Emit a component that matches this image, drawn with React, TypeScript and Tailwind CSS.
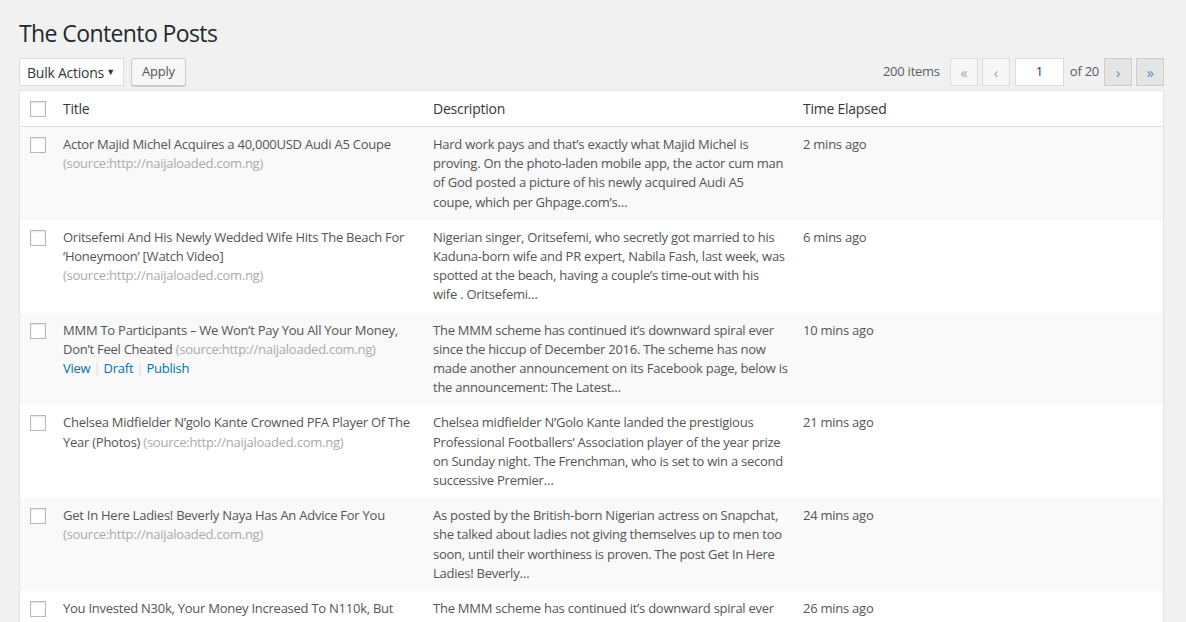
import React from "react";

type Post = {
  title: string[];
  sourceInline?: boolean;
  desc: string[];
  time: string;
  actions?: boolean;
};

const SOURCE = "(source:http://naijaloaded.com.ng)";

const POSTS: Post[] = [
  {
    title: ["Actor Majid Michel Acquires a 40,000USD Audi A5 Coupe"],
    desc: [
      "Hard work pays and that’s exactly what Majid Michel is",
      "proving. On the photo-laden mobile app, the actor cum man",
      "of God posted a picture of his newly acquired Audi A5",
      "coupe, which per Ghpage.com’s…",
    ],
    time: "2 mins ago",
  },
  {
    title: ["Oritsefemi And His Newly Wedded Wife Hits The Beach For", "‘Honeymoon’ [Watch Video]"],
    desc: [
      "Nigerian singer, Oritsefemi, who secretly got married to his",
      "Kaduna-born wife and PR expert, Nabila Fash, last week, was",
      "spotted at the beach, having a couple’s time-out with his",
      "wife . Oritsefemi…",
    ],
    time: "6 mins ago",
  },
  {
    title: ["MMM To Participants – We Won’t Pay You All Your Money,", "Don’t Feel Cheated"],
    sourceInline: true,
    actions: true,
    desc: [
      "The MMM scheme has continued it’s downward spiral ever",
      "since the hiccup of December 2016. The scheme has now",
      "made another announcement on its Facebook page, below is",
      "the announcement: The Latest…",
    ],
    time: "10 mins ago",
  },
  {
    title: ["Chelsea Midfielder N’golo Kante Crowned PFA Player Of The", "Year (Photos)"],
    sourceInline: true,
    desc: [
      "Chelsea midfielder N’Golo Kante landed the prestigious",
      "Professional Footballers’ Association player of the year prize",
      "on Sunday night. The Frenchman, who is set to win a second",
      "successive Premier…",
    ],
    time: "21 mins ago",
  },
  {
    title: ["Get In Here Ladies! Beverly Naya Has An Advice For You"],
    desc: [
      "As posted by the British-born Nigerian actress on Snapchat,",
      "she talked about ladies not giving themselves up to men too",
      "soon, until their worthiness is proven. The post Get In Here",
      "Ladies! Beverly…",
    ],
    time: "24 mins ago",
  },
  {
    title: ["You Invested N30k, Your Money Increased To N110k, But", "You Can’t Withdraw – MMM Participants Lament"],
    desc: [
      "The MMM scheme has continued it’s downward spiral ever",
      "since the hiccup of December 2016. Participants have now",
      "taken to social media to lament over their frozen",
      "accounts. The…",
    ],
    time: "26 mins ago",
  },
];

const COLS = "grid grid-cols-[33px_minmax(0,1fr)_minmax(0,1fr)_minmax(0,1fr)]";

function Checkbox() {
  return <span className="block w-4 h-4 bg-white border border-[#b4b9be] shadow-[inset_0_1px_2px_rgba(0,0,0,0.1)]" />;
}

function PageBtn({ label, active }: { label: string; active?: boolean }) {
  return (
    <span
      className={
        active
          ? "flex items-center justify-center w-7 h-7 border border-[#cccccc] bg-[#e5e5e5] text-[#4f94c4] text-[15px] leading-none"
          : "flex items-center justify-center w-7 h-7 border border-[#dddddd] bg-[#f7f7f7] text-[#a0a5aa] text-[15px] leading-none"
      }
    >
      {label}
    </span>
  );
}

export default function App() {
  return (
    <div
      className="min-h-[622px] bg-[#f1f1f1] text-[13px] text-[#555d66] tracking-[-0.25px]"
      style={{ fontFamily: "'Open Sans', 'Noto Sans', sans-serif" }}
    >
      <div className="pl-[19px] pr-[22px]">
        <h1 className="pt-[19px] pb-[10px] text-[23px] leading-[29px] text-[#23282d] font-normal tracking-[-0.6px]">
          The Contento Posts
        </h1>

        {/* toolbar */}
        <div className="flex items-center h-[28px] mb-[4px]">
          <div className="flex items-center justify-between w-[105px] h-[28px] bg-white border border-[#dddddd] pl-[7px] pr-[8px] text-[14px] text-[#32373c]">
            <span>Bulk Actions</span>
            <span className="text-[9px] text-[#32373c]">▼</span>
          </div>
          <button className="ml-[7px] h-[28px] px-[10px] bg-[#f7f7f7] border border-[#cccccc] rounded-[3px] shadow-[0_1px_0_#cccccc] text-[13px] text-[#555555]">
            Apply
          </button>
          <div className="ml-auto flex items-center">
            <span className="mr-[10px] text-[13px] text-[#555d66]">200 items</span>
            <PageBtn label="«" />
            <span className="w-1" />
            <PageBtn label="‹" />
            <div className="ml-[5px] flex items-center justify-center w-[49px] h-[28px] bg-white border border-[#dddddd] text-[13px] text-[#32373c]">
              1
            </div>
            <span className="ml-[6px] mr-[5px] text-[13px]">of 20</span>
            <PageBtn label="›" active />
            <span className="w-1" />
            <PageBtn label="»" active />
          </div>
        </div>

        {/* table */}
        <div className="bg-white border border-[#e5e5e5] shadow-[0_1px_1px_rgba(0,0,0,0.04)]">
          <div className={COLS + " border-b border-[#e1e1e1] h-[36px] items-center text-[14px] text-[#32373c]"}>
            <div className="pl-[10px]"><Checkbox /></div>
            <div className="pl-[10px]">Title</div>
            <div className="pl-[10px]">Description</div>
            <div className="pl-[10px]">Time Elapsed</div>
          </div>
          {POSTS.map((p, i) => (
            <div
              key={i}
              className={(i % 2 === 0 ? "bg-[#f9f9f9] " : "bg-white ") + COLS + " leading-[19.2px] py-[8px] min-h-[92px]"}
            >
              <div className="pl-[10px] pt-[2px]"><Checkbox /></div>
              <div className="px-[10px] text-[#555555]">
                {p.title.map((t, j) => (
                  <div key={j} className="whitespace-nowrap">
                    {t}
                    {p.sourceInline && j === p.title.length - 1 && <span className="text-[#aaaaaa]"> {SOURCE}</span>}
                  </div>
                ))}
                {!p.sourceInline && <div className="whitespace-nowrap text-[#aaaaaa]">{SOURCE}</div>}
                {p.actions && (
                  <div className="whitespace-nowrap">
                    <a className="text-[#0073aa]">View</a>
                    <span className="text-[#dddddd]"> | </span>
                    <a className="text-[#0073aa]">Draft</a>
                    <span className="text-[#dddddd]"> | </span>
                    <a className="text-[#0073aa]">Publish</a>
                  </div>
                )}
              </div>
              <div className="px-[10px] text-[#555555]">
                {p.desc.map((d, j) => (
                  <div key={j} className="whitespace-nowrap">{d}</div>
                ))}
              </div>
              <div className="px-[10px] text-[#555555]">{p.time}</div>
            </div>
          ))}
        </div>
      </div>
    </div>
  );
}
